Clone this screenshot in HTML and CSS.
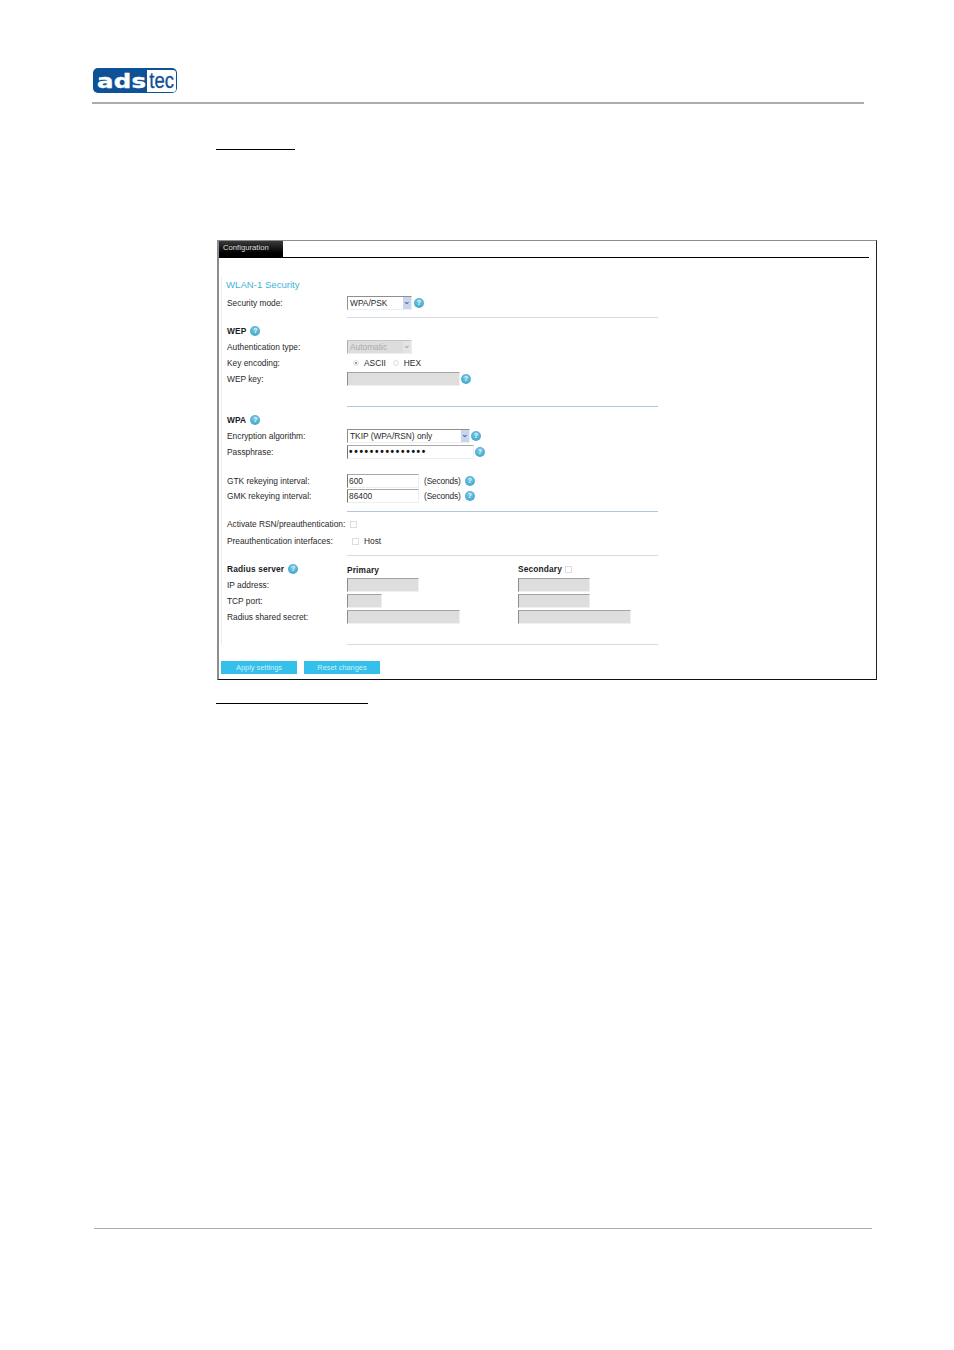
FILE: index.html
```html
<!DOCTYPE html>
<html lang="en">
<head>
<meta charset="utf-8">
<title>WLAN-1 Security</title>
<link rel="stylesheet" href="styles.css">
</head>
<body>
<div class="page">
  <div class="logo"><span class="logo-ads">ads</span><span class="logo-tec"><span class="logo-tec-text">tec</span></span></div>
  <div class="head-rule"></div>
  <div class="cut cut-top"></div>
  <div class="frame">
    <div class="tabbar"><div class="tab">Configuration</div></div>
    <div class="form">
      <div class="heading">WLAN-1 Security</div>
      <div class="row">
        <div class="label">Security mode:</div>
        <div class="select sel-short"><span>WPA/PSK</span><i class="arrow">&#8964;</i></div>
        <span class="help">?</span>
      </div>
      <div class="rule"></div>
      <div class="row"><b class="title">WEP</b><span class="help help-title">?</span></div>
      <div class="row">
        <div class="label">Authentication type:</div>
        <div class="select sel-short is-off"><span>Automatic</span><i class="arrow">&#8964;</i></div>
      </div>
      <div class="row">
        <div class="label">Key encoding:</div>
        <span class="radio radio-a on"></span><span class="opt">ASCII</span>
        <span class="radio radio-b"></span><span class="opt">HEX</span>
      </div>
      <div class="row">
        <div class="label">WEP key:</div>
        <div class="field f-wide off"></div>
        <span class="help help-tight">?</span>
      </div>
      <div class="rule rule-strong gap-big"></div>
      <div class="row"><b class="title">WPA</b><span class="help help-title">?</span></div>
      <div class="row">
        <div class="label">Encryption algorithm:</div>
        <div class="select sel-long"><span>TKIP (WPA/RSN) only</span><i class="arrow">&#8964;</i></div>
        <span class="help help-tight">?</span>
      </div>
      <div class="row">
        <div class="label">Passphrase:</div>
        <div class="field f-pass dots">&#8226;&#8226;&#8226;&#8226;&#8226;&#8226;&#8226;&#8226;&#8226;&#8226;&#8226;&#8226;&#8226;&#8226;&#8226;</div>
        <span class="help help-tight">?</span>
      </div>
      <div class="row row-gtk">
        <div class="label">GTK rekeying interval:</div>
        <div class="field f-mid">600</div>
        <span class="unit">(Seconds)</span>
        <span class="help help-unit">?</span>
      </div>
      <div class="row">
        <div class="label">GMK rekeying interval:</div>
        <div class="field f-mid">86400</div>
        <span class="unit">(Seconds)</span>
        <span class="help help-unit">?</span>
      </div>
      <div class="rule rule-strong rule-tight"></div>
      <div class="row">
        <div class="label">Activate RSN/preauthentication:</div>
        <span class="check check-rsn"></span>
      </div>
      <div class="row row-pre">
        <div class="label">Preauthentication interfaces:</div>
        <span class="check check-host"></span><span class="opt">Host</span>
      </div>
      <div class="rule"></div>
      <div class="row">
        <div class="label"><b class="title">Radius server</b><span class="help help-title">?</span></div>
        <div class="col"><b class="title title-low">Primary</b></div>
        <div class="col"><b class="title">Secondary</b><span class="check check-sec"></span></div>
      </div>
      <div class="row">
        <div class="label">IP address:</div>
        <div class="col"><div class="field f-mid off"></div></div>
        <div class="col"><div class="field f-mid off"></div></div>
      </div>
      <div class="row">
        <div class="label">TCP port:</div>
        <div class="col"><div class="field f-port off"></div></div>
        <div class="col"><div class="field f-mid off"></div></div>
      </div>
      <div class="row">
        <div class="label">Radius shared secret:</div>
        <div class="col"><div class="field f-wide off"></div></div>
        <div class="col"><div class="field f-wide off"></div></div>
      </div>
      <div class="rule gap-big"></div>
    </div>
    <div class="actions">
      <button class="btn" type="button">Apply settings</button>
      <button class="btn" type="button">Reset changes</button>
    </div>
  </div>
  <div class="cut cut-bottom"></div>
  <div class="foot-rule"></div>
</div>
</body>
</html>
```

FILE: styles.css
```css
* { box-sizing: border-box; }
html, body { margin: 0; padding: 0; background: #fff; }
body { font-family: "Liberation Sans", Arial, sans-serif; font-size: 8.35px; color: #2a2a2a; }
.page { height: 1350px; padding-top: 68px; overflow: hidden; }

.logo {
  display: flex; align-items: center; justify-content: space-between;
  width: 84px; height: 25px; margin-left: 93px; padding: 0 1px 0 4px;
  background: #0d5196; border-radius: 5px;
}
.logo-ads {
  font-family: "DejaVu Sans", sans-serif; font-weight: 700; font-size: 20px; line-height: 22px;
  letter-spacing: 0.2px; color: #fff; -webkit-text-stroke: 0.4px #fff;
  transform: scaleX(1.22); transform-origin: left center;
}
.logo-tec {
  display: flex; align-items: center; justify-content: center;
  width: 29px; height: 22px; background: #fff; border-radius: 0 3px 3px 0;
}
.logo-tec-text {
  display: block; color: #0d5196; font-size: 22px; line-height: 22px;
  -webkit-text-stroke: 0.3px #0d5196; transform: scaleX(0.84);
}
.head-rule { width: 772px; height: 2px; margin: 9px 0 0 92px; background: #a9adb0; }
.cut { height: 1px; background: #000; margin-left: 216px; }
.cut-top { width: 79px; margin-top: 45px; }
.cut-bottom { width: 152px; margin-top: 23px; }
.foot-rule { width: 778px; height: 1px; margin: 524px 0 0 94px; background: #a9adb0; }

.frame {
  width: 660px; height: 440px; margin: 90px 0 0 217px;
  border-style: solid; border-color: #8d8d8d #222 #111 #8d8d8d;
  border-width: 1px 1px 1px 2px;
}
.tabbar { width: 650px; height: 17px; border-bottom: 1px solid #000; }
.tab {
  width: 64px; height: 17px; padding-left: 4px;
  background: linear-gradient(#3a3a3a, #000 70%);
  color: #ddd; font-size: 7.7px; line-height: 13px;
}
.form { margin: 19px 0 0 2px; padding-left: 5px; border-left: 1px solid #e6eff5; }
.heading { height: 16px; margin: 0 0 2px -1px; font-size: 9.6px; line-height: 15px; color: #3fb4d8; }
.row { display: flex; align-items: center; height: 16px; white-space: nowrap; }
.row-gtk { height: 15px; margin-top: 13px; }
.row-pre { margin-top: 1px; }
.label { display: flex; align-items: center; width: 120px; flex: none; }
.title { font-weight: 700; color: #1c1c1c; letter-spacing: 0.15px; }
.title-low { position: relative; top: 1px; }
.col { display: flex; align-items: center; width: 171px; flex: none; }

.rule { width: 311px; height: 1px; margin: 6px 0 5px 120px; background: #d3dae8; }
.rule-strong { background: #b4c5de; }
.gap-big { margin-top: 19px; }
.rule-tight { margin: 7px 0 4px 120px; }

.select {
  display: flex; align-items: center; justify-content: space-between; height: 14px;
  padding-left: 2px; background: #fff;
  border-style: solid; border-width: 1px; border-color: #8f8f8f #eee #eee #8f8f8f;
}
.sel-short { width: 65px; }
.sel-long { width: 123px; }
.is-off { background: #ddd; color: #aaa; border-color: #c4c4c4 #eee #eee #b0b0b0; }
.arrow {
  display: block; width: 8px; height: 12px; background: #c6d6f0; color: #33496e;
  font-style: normal; font-size: 9px; line-height: 8px; text-align: center;
}
.is-off .arrow { background: #e4e4e4; color: #999; }

.field {
  height: 14px; padding-left: 1px; line-height: 13px; background: #fff;
  border-style: solid; border-width: 1px; border-color: #a8a8a8 #eee #eee #777;
}
.field.off { background: #dedede; border-color: #a5a5a0 #f0f0f0 #f0f0f0 #8d8d88; }
.f-mid { width: 72px; }
.f-wide { width: 113px; }
.f-port { width: 35px; }
.f-pass { width: 127px; }
.dots { font-size: 10px; font-weight: 700; letter-spacing: 1.7px; color: #111; line-height: 12px; }

.help {
  display: block; flex: none; width: 10px; height: 10px; margin-left: 2px; border-radius: 50%;
  background: radial-gradient(circle at 50% 35%, #7fcbe4, #2f9cc4);
  color: #e9f6fb; font-size: 7px; font-weight: 700; line-height: 10px; text-align: center;
}
.help-title { margin-left: 4px; }
.help-tight { margin-left: 1px; }
.help-unit { margin-left: 4px; }
.unit { margin-left: 5px; letter-spacing: -0.15px; }

.radio, .check { display: block; flex: none; border: 1px solid #ddd; background: #fff; }
.radio { width: 6px; height: 6px; border-radius: 50%; }
.radio.on { background: radial-gradient(circle, #999 30%, #fff 45%); }
.radio-a { margin: 0 5px 0 6px; }
.radio-b { margin: 0 5px 0 7px; }
.check { width: 7px; height: 7px; }
.check-rsn { margin-left: 3px; }
.check-host { margin: 0 5px 0 5px; }
.check-sec { margin-left: 3px; }

.actions { display: flex; gap: 7px; margin: 16px 0 0 2px; }
.btn {
  width: 76px; height: 13px; padding: 0; border: 0; background: #35c0ec;
  color: #d2eff9; font-family: inherit; font-size: 7.4px; line-height: 13px;
}
```
